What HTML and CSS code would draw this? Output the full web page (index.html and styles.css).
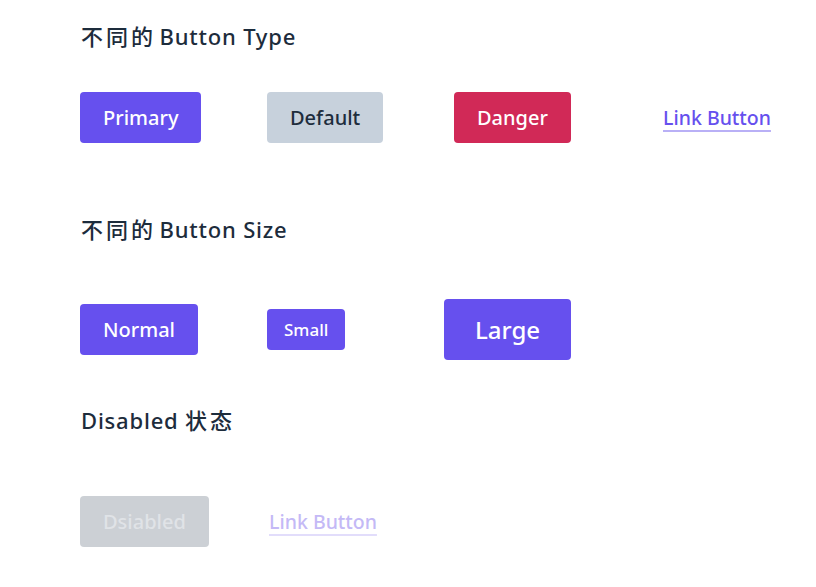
FILE: index.html
```html
<!DOCTYPE html>
<html lang="zh-CN">
<head>
<meta charset="utf-8">
<title>Buttons</title>
<link rel="stylesheet" href="styles.css">
</head>
<body>
<main class="page">
  <section class="section section-type">
    <h2 class="title"><span class="cjk">不同的</span> Button Type</h2>
    <div class="row">
      <button class="btn btn-primary">Primary</button>
      <button class="btn btn-default">Default</button>
      <button class="btn btn-danger">Danger</button>
      <a class="btn btn-link" href="#">Link Button</a>
    </div>
  </section>
  <section class="section section-size">
    <h2 class="title"><span class="cjk">不同的</span> Button Size</h2>
    <div class="row">
      <button class="btn btn-primary">Normal</button>
      <button class="btn btn-primary btn-sm">Small</button>
      <button class="btn btn-primary btn-lg">Large</button>
    </div>
  </section>
  <section class="section section-disabled">
    <h2 class="title">Disabled <span class="cjk">状态</span></h2>
    <div class="row">
      <button class="btn btn-disabled" disabled>Dsiabled</button>
      <a class="btn btn-link btn-link-disabled" href="#">Link Button</a>
    </div>
  </section>
</main>
</body>
</html>
```
FILE: styles.css
```css
html, body {
  margin: 0;
  padding: 0;
  background: #ffffff;
}
body {
  font-family: "Noto Sans", "Noto Sans CJK SC", sans-serif;
  color: #1b2a3a;
}
.page {
  padding: 21px 0 0 80px;
}
.title {
  margin: 0 0 0 1px;
  font-size: 22px;
  font-weight: 500;
  line-height: 30px;
  letter-spacing: 0.8px;
  color: #1d2c3c;
}
.cjk {
  font-weight: 500;
  letter-spacing: 3px;
  margin-right: -3px;
}
.row {
  display: grid;
  grid-template-columns: 187px 187px 187px 187px;
  align-items: center;
  justify-items: start;
  height: 61px;
}
.section-type .row { margin-top: 36px; }
.section-size { margin-top: 66px; }
.section-size .row { margin-top: 55px; }
.section-disabled { margin-top: 45px; }
.section-disabled .row { margin-top: 56px; }

.btn {
  box-sizing: border-box;
  display: inline-flex;
  align-items: center;
  justify-content: center;
  height: 51px;
  padding: 0 23px;
  border: none;
  border-radius: 4px;
  font-family: "Noto Sans", sans-serif;
  font-size: 20px;
  font-weight: 500;
  text-decoration: none;
  cursor: pointer;
}
.btn-primary {
  background: #6650ee;
  color: #ffffff;
}
.btn-default {
  background: #c7d1dc;
  color: #1e2d3d;
}
.btn-danger {
  background: #d12957;
  color: #ffffff;
}
.btn-link {
  background: transparent;
  color: #6650ee;
  padding: 0 22px;
  font-size: 19.5px;
  text-decoration: underline;
  text-decoration-color: #b9b0f6;
  text-decoration-thickness: 2px;
  text-underline-offset: 5px;
}
.btn-sm {
  height: 41px;
  padding: 0 17px;
  font-size: 17px;
}
.btn-lg {
  height: 61px;
  padding: 0 31px;
  font-size: 24px;
  margin-left: -10px;
}
.btn-disabled {
  background: #ccd0d5;
  color: #e0e3e7;
  cursor: not-allowed;
}
.btn-link-disabled {
  color: #c4b9f6;
  text-decoration-color: #e2ddfb;
  padding: 0 2px;
  cursor: not-allowed;
}
```
